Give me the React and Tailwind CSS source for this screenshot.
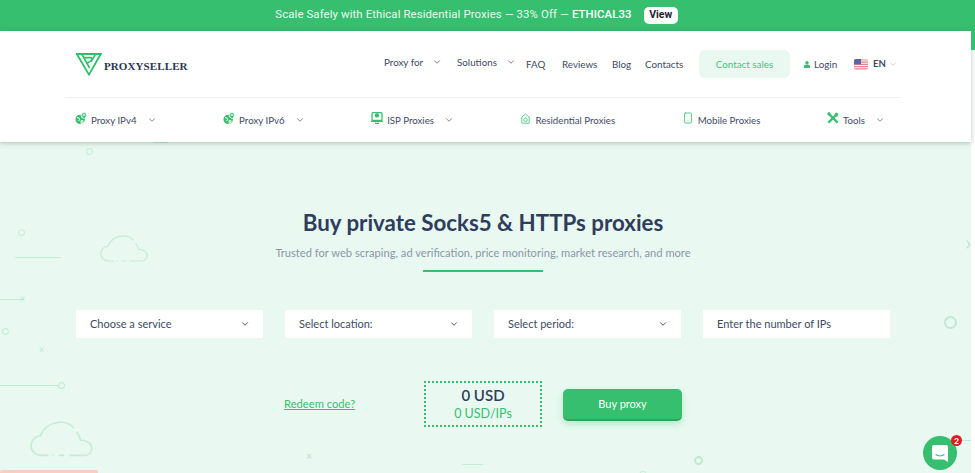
import { ChevronDown, Smartphone } from "lucide-react";

const GlobeIcon = () => (
  <svg width="12" height="13" viewBox="0 0 12 13" fill="none" className="mt-[-3px] shrink-0">
    <circle cx="5.2" cy="7.4" r="4.7" fill="#35bf6f" />
    <path d="M2 5.5l2 .6.6 1.7-1.2 1.3M6 3.6l.8 1.8 1.8.4M6.2 8.4l2 .4-.6 2.2-1.6.4z" stroke="#fff" strokeWidth="1" />
    <path d="M9 .6a2.4 2.4 0 0 1 2.4 2.4C11.4 4.6 9 6.8 9 6.8S6.6 4.6 6.6 3A2.4 2.4 0 0 1 9 .6z" fill="#35bf6f" stroke="#fff" strokeWidth=".7" />
    <circle cx="9" cy="3" r=".9" fill="#fff" />
  </svg>
);

const IspIcon = () => (
  <svg width="12" height="12" viewBox="0 0 12 12" fill="none" className="mt-[-3px] shrink-0">
    <rect x="1" y=".7" width="10" height="7.8" rx="1" stroke="#35bf6f" strokeWidth="1.3" />
    <path d="M3.8 3.4a2.2 2.2 0 1 0 4.4 0 2.2 2.2 0 1 0-4.4 0z" fill="#35bf6f" />
    <path d="M0 9.4h12M4 11.4h4" stroke="#35bf6f" strokeWidth="1.4" />
  </svg>
);

const HomeIcon = () => (
  <svg width="11" height="11" viewBox="0 0 11 11" fill="none" className="mt-[-3px] shrink-0">
    <path d="M.8 5 5.5 1l4.7 4M1.8 4.4v5.8h7.4V4.4" stroke="#5fcf90" strokeWidth="1" />
    <circle cx="5.5" cy="6.8" r="1.8" stroke="#5fcf90" strokeWidth="1" />
  </svg>
);

const ToolsIcon = () => (
  <svg width="12" height="12" viewBox="0 0 12 12" fill="none" className="mt-[-3px] shrink-0">
    <path d="M1.4 1.4 10.6 10.6" stroke="#35bf6f" strokeWidth="2.2" />
    <path d="M1.4 10.6 8 4" stroke="#35bf6f" strokeWidth="2.2" />
    <path d="M7 3.2 8.8.6l2.6 1-1 2.8-2.400.8z" fill="#35bf6f" />
    <path d="M0 2 2-.2l1.6 1.6L1.6 3.4z" fill="#35bf6f" />
  </svg>
);

const Logo = () => (
  <svg width="26" height="23" viewBox="0 0 26 23" fill="none" className="shrink-0">
    <path d="M.8 1h24L13 21.6z" stroke="#2fbf6c" strokeWidth="1.8" strokeLinejoin="miter" />
    <path d="M6 1.4 13.6 15M7 4.600h7.600c1.600 0 2 2 .6 3L10.600 10.600M19.400 1.400 15 8.800" stroke="#2fbf6c" strokeWidth="1.700" />
  </svg>
);

const Flag = () => (
  <svg width="14" height="11" viewBox="0 0 14 11" className="shrink-0 rounded-[2px]">
    <rect width="14" height="11" fill="#fff" />
    <path d="M0 1h14M0 3.2h14M0 5.4h14M0 7.6h14M0 9.8h14" stroke="#e8808c" strokeWidth="1.2" />
    <rect width="7" height="5.4" fill="#5a64a0" />
  </svg>
);

const Cloud = ({ w, h, className }) => (
  <svg width={w} height={h} viewBox="0 0 48 27" fill="none" className={`absolute ${className}`}>
    <path d="M14 26H9C4 26 .8 22.6.8 18.6c0-4 3.2-7.4 7.4-7.6C10 5 16 .8 24 .8c4 0 7 1.600 9.500 4.500M35.500 8c1.500 2 2.500 4 3 6.500 4.500-.5 8.700 2.500 8.700 6 0 3-2.500 5.500-5.200 5.500H30M26 26h-4M18 26h-1" stroke="#c5ecd7" strokeWidth="1.2" />
  </svg>
);

// background bits, they only sit behind the hero
const Decor = () => (
  <div className="absolute inset-0 overflow-hidden">
    <div className="absolute left-[153px] top-0 w-[15px] h-[1px] bg-[#bfe9d2]" />
    <div className="absolute left-[86px] top-[6px] w-[7px] h-[7px] rounded-full border border-[#bfe9d2]" />
    <div className="absolute left-[18px] top-[87px] w-[7px] h-[7px] rounded-full border border-[#bfe9d2]" />
    <div className="absolute left-[15px] top-[115px] w-[46px] h-[1px] bg-[#c5ecd7]" />
    <Cloud w={48} h={27} className="left-[100px] top-[93px]" />
    <div className="absolute left-0 top-[157px] w-[24px] h-[1px] bg-[#c5ecd7]" />
    <div className="absolute left-[20px] top-[150px] text-[9px] leading-[14px] text-[#b5e6cb]">×</div>
    <div className="absolute left-[2px] top-[186px] w-[7px] h-[7px] rounded-full border border-[#bfe9d2]" />
    <div className="absolute left-[39px] top-[201px] text-[9px] leading-[14px] text-[#b5e6cb]">×</div>
    <div className="absolute left-0 top-[243px] w-[58px] h-[1px] bg-[#bfe9d2]" />
    <div className="absolute left-[58px] top-[240px] w-[7px] h-[7px] rounded-full border border-[#b5e6cb]" />
    <Cloud w={63} h={36} className="left-[30px] top-[279px]" />
    <div className="absolute left-[306px] top-[306px] text-[11px] leading-[16px] text-[#b5e6cb]">×</div>
    <div className="absolute left-[462px] top-[322px] w-[21px] h-[1px] bg-[#c5ecd7]" />
    <div className="absolute left-[638px] top-[329px] w-[10px] h-[10px] rounded-full border border-[#c5ecd7]" />
    <div className="absolute left-[694px] top-[314px] w-[9px] h-[9px] rounded-full border-2 border-[#bfe9d2]" />
    <div className="absolute left-[944px] top-[174px] w-[13px] h-[13px] rounded-full border-2 border-[#bfe9d2]" />
    <svg width="5" height="9" viewBox="0 0 5 9" fill="none" className="absolute left-[966px] top-[98px]">
      <path d="M.8.8 4 4.500.8 8.200" stroke="#bfe9d2" strokeWidth="1.500" />
    </svg>
    <div className="absolute left-[958px] top-[298px] w-[13px] h-[1px] bg-[#bfe9d2]" />
    <div className="absolute left-0 top-[328px] w-[98px] h-[4px] rounded-t-[2px] bg-[#f9cfc0]" />
  </div>
);

const subNav = [
  { label: "Proxy IPv4", icon: <GlobeIcon />, arrow: true },
  { label: "Proxy IPv6", icon: <GlobeIcon />, arrow: true },
  { label: "ISP Proxies", icon: <IspIcon />, arrow: true },
  { label: "Residential Proxies", icon: <HomeIcon /> },
  { label: "Mobile Proxies", icon: <Smartphone size={12} strokeWidth={1.6} className="text-[#35bf6f] mt-[-3px] shrink-0" /> },
  { label: "Tools", icon: <ToolsIcon />, arrow: true },
];

const selects = ["Choose a service", "Select location:", "Select period:"];

const App = () => {
  return (
    <div className="w-[975px] h-[473px] overflow-hidden bg-white flex flex-col font-['Lato',sans-serif] text-[#3d4a66]">
      {/* BANNER */}
      <div className="h-[31px] shrink-0 bg-[#36bf6f] flex items-center justify-center gap-[12px] pr-[22px] pb-[1px] text-white text-[11.4px] font-['Roboto',sans-serif]">
        <span className="tracking-[0.1px] text-[#eafaf1]">
          Scale Safely with Ethical Residential Proxies — 33% Off — <span className="font-medium text-white">ETHICAL33</span>
        </span>
        <span className="bg-white text-[#1b2430] rounded-[5px] h-[17px] w-[34px] flex items-center justify-center text-[10.5px] font-bold">View</span>
      </div>

      <div className="flex flex-1 min-h-0">
        <div className="w-[971px] flex flex-col">
          {/* HEADER */}
          <header className="h-[111px] shrink-0 bg-white relative z-10 shadow-[0_1px_5px_rgba(60,80,70,0.35)] flex flex-col">
            <div className="h-[66px] flex items-center pl-[76px] text-[9.8px]">
              <div className="flex items-center gap-[2px] w-[308px] mt-[1px]">
                <Logo />
                <span className="font-['Liberation_Serif',serif] font-bold text-[11px] text-[#2c3655] mt-[3px] tracking-[0.1px]">PROXYSELLER</span>
              </div>
              <span className="w-[40px] mt-[-3px]">Proxy for</span>
              <ChevronDown size={10} strokeWidth={1.6} className="ml-[8px] mt-[-4px]" />
              <span className="w-[40px] ml-[15px] mt-[-3px]">Solutions</span>
              <ChevronDown size={10} strokeWidth={1.6} className="ml-[9px] mt-[-4px]" />
              <span className="w-[20px] ml-[10px]">FAQ</span>
              <span className="w-[36px] ml-[16px]">Reviews</span>
              <span className="w-[19px] ml-[14px]">Blog</span>
              <span className="w-[38px] ml-[14px]">Contacts</span>
              <span className="ml-[16px] w-[91px] h-[28px] rounded-[6px] bg-[#e9f9f1] text-[#45c47d] flex items-center justify-center">Contact sales</span>
              <svg width="6" height="7" viewBox="0 0 6 7" fill="#35bf6f" className="ml-[14px]">
                <circle cx="3" cy="1.700" r="1.700" />
                <path d="M0 7V5.500C0 4.300 1 3.600 3 3.600s3 .7 3 1.900V7z" />
              </svg>
              <span className="w-[23px] ml-[4px]">Login</span>
              <span className="ml-[17px]"><Flag /></span>
              <span className="ml-[5px] w-[12px] font-bold text-[9.5px]">EN</span>
              <ChevronDown size={10} className="ml-[3px] text-[#c3c8d2]" />
            </div>

            <nav className="ml-[65px] w-[836px] flex-1 border-t border-[#eef0f2] pl-[10px] pr-[16px] flex items-center justify-between text-[9.7px]">
              {subNav.map((item) => (
                <div key={item.label} className="flex items-center gap-[4px]">
                  {item.icon}
                  <span>{item.label}</span>
                  {item.arrow && <ChevronDown size={10} strokeWidth={1.6} className="ml-[6px]" />}
                </div>
              ))}
            </nav>
          </header>

          {/* HERO */}
          <main className="relative flex-1 bg-[#e9f9f1]">
            <Decor />
            <div className="relative ml-[76px] w-[814px] flex flex-col items-center">
              <h1 className="mt-[66px] text-[22.3px] leading-[30px] font-bold text-[#2f3d5c]">
                Buy private Socks5 &amp; HTTPs proxies
              </h1>
              <p className="mt-[6px] text-[11.15px] leading-[18px] text-[#8b96a8]">
                Trusted for web scraping, ad verification, price monitoring, market research, and more
              </p>
              <div className="mt-[8px] w-[120px] h-[2px] bg-[#35bf6f]" />

              <div className="mt-[38px] w-full flex gap-[22px] text-[11px]">
                {selects.map((label) => (
                  <div key={label} className="w-[187px] h-[28px] bg-white pl-[14px] pr-[13px] flex items-center justify-between">
                    <span className="mt-[1px]">{label}</span>
                    <ChevronDown size={10} strokeWidth={2.2} />
                  </div>
                ))}
                <div className="w-[187px] h-[28px] bg-white pl-[14px] flex items-center">
                  <span>Enter the number of IPs</span>
                </div>
              </div>

              <div className="mt-[43px] w-full flex items-center">
                <a className="w-[71px] ml-[208px] mt-[1px] whitespace-nowrap text-[11.2px] text-[#35bf6f] underline">Redeem code?</a>
                <div className="ml-[69px] w-[118px] h-[46px] border-2 border-dotted border-[#35bf6f] flex flex-col items-center justify-center">
                  <span className="text-[15px] leading-[20px] font-semibold text-[#2f3d5c]">0 USD</span>
                  <span className="text-[12.5px] leading-[18px] text-[#35bf6f]">0 USD/IPs</span>
                </div>
                <button className="ml-[21px] mt-[2px] w-[119px] h-[32px] pt-[1px] rounded-[5px] bg-[#35bf6f] border-b-2 border-[#2aa65e] text-white text-[11px] shadow-[0_3px_7px_rgba(53,191,111,0.3)]">
                  Buy proxy
                </button>
              </div>
            </div>
          </main>
        </div>

        {/* RIGHT EDGE */}
        <div className="w-[4px] shrink-0 relative z-20">
          <div className="h-[19px] bg-[#36bf6f]" />
        </div>
      </div>

      {/* CHAT BUTTON */}
      <div className="fixed left-[923px] top-[436px] z-30 w-[34px] h-[34px] rounded-full bg-[#35bf6f] flex items-center justify-center">
        <svg width="16" height="17" viewBox="0 0 16 17" fill="none">
          <path d="M2 0h12a2 2 0 0 1 2 2v15l-4-2.500H2a2 2 0 0 1-2-2V2a2 2 0 0 1 2-2z" fill="#fff" />
          <path d="M3.500 9.500c2.500 1.700 6.500 1.700 9 0" stroke="#35bf6f" strokeWidth="1.200" />
        </svg>
        <span className="absolute right-[-5px] top-[-1px] w-[11px] h-[11px] rounded-full bg-[#e01b22] text-white text-[8px] font-bold font-['Inter',sans-serif] flex items-center justify-center">2</span>
      </div>
    </div>
  );
};

export default App;
